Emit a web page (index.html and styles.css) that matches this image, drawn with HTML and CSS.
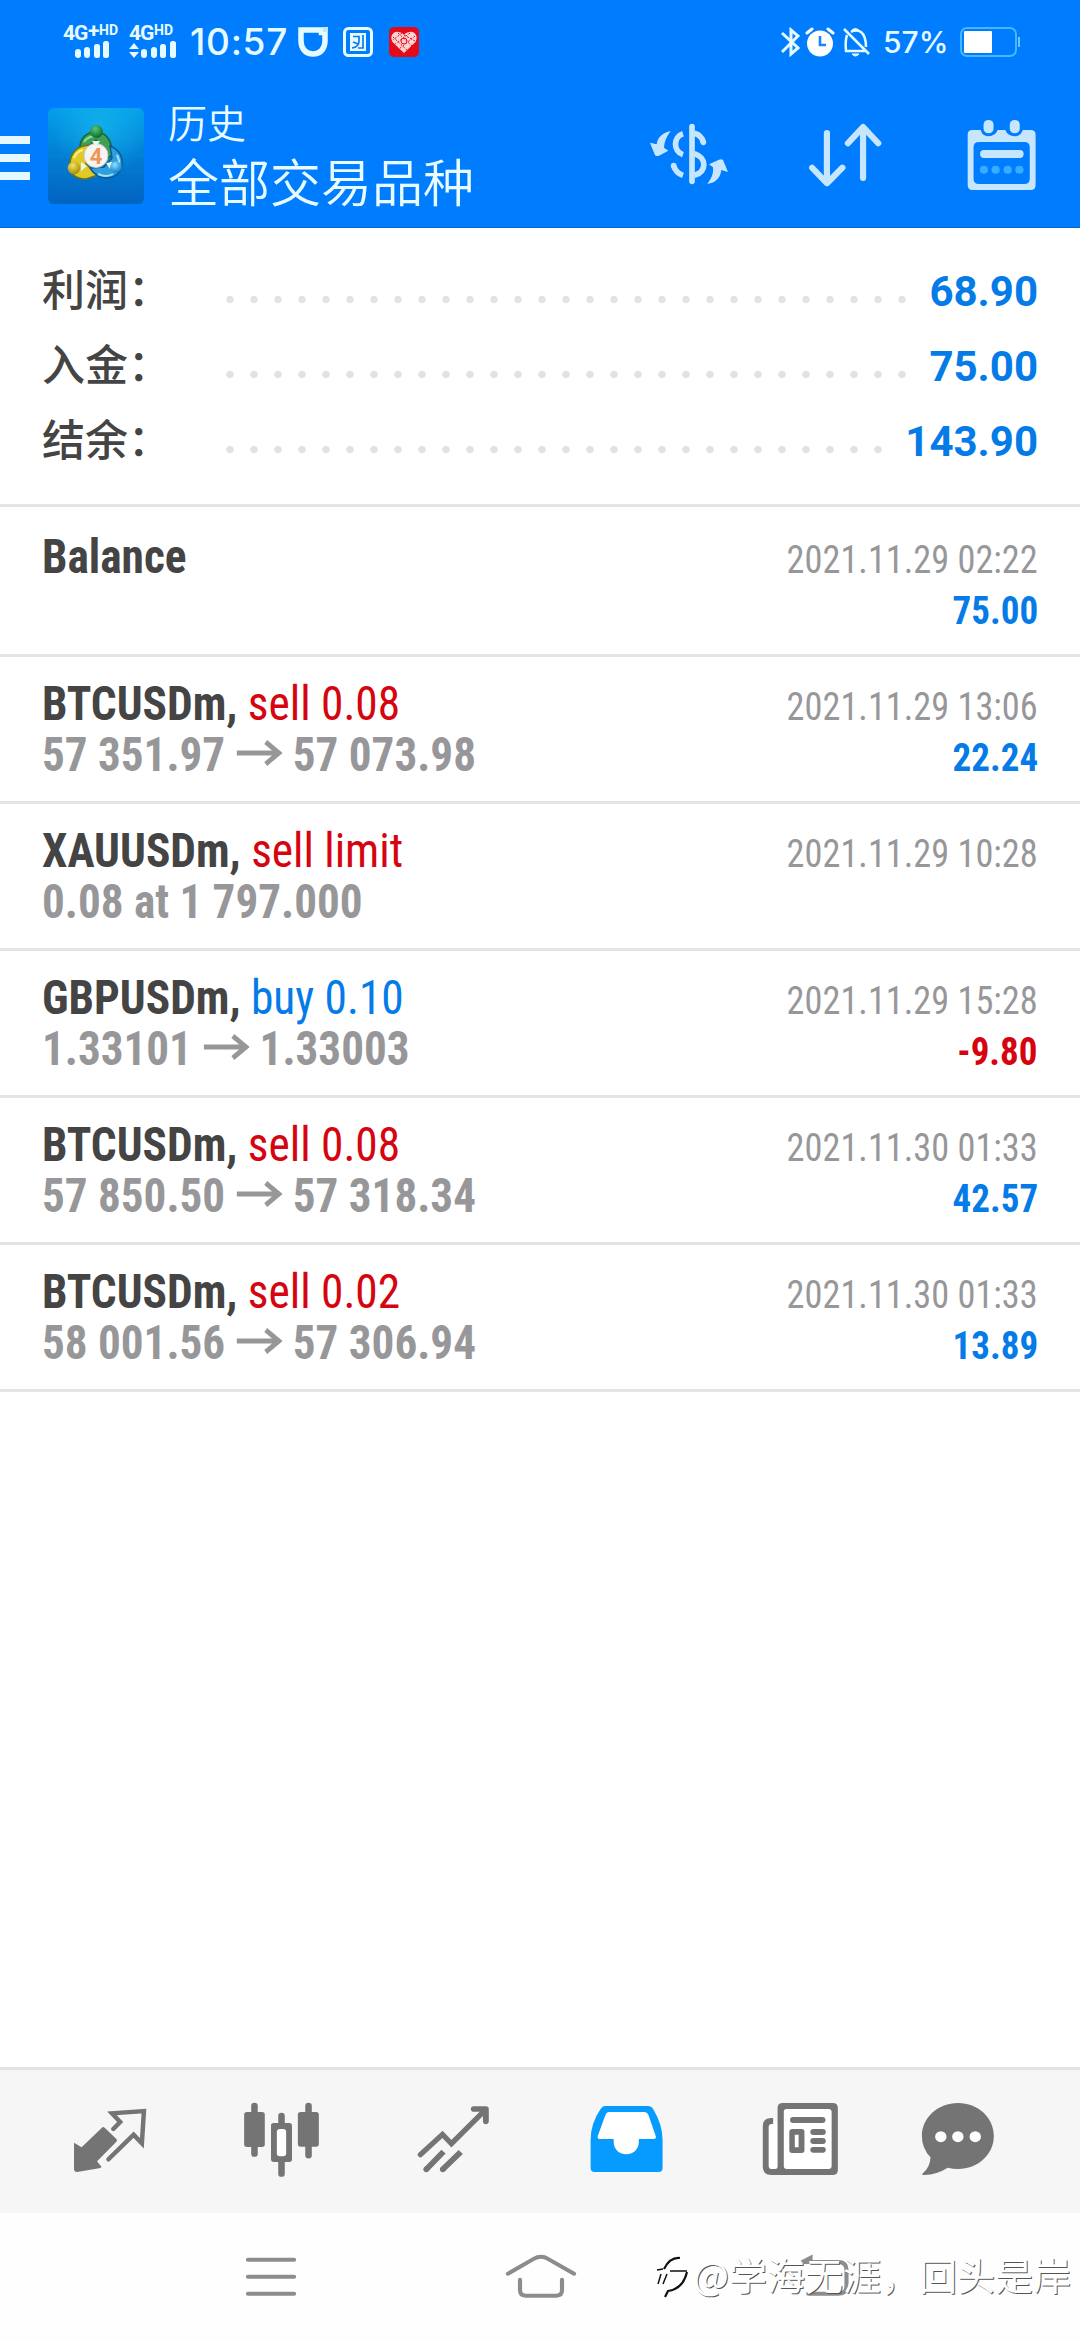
FILE: index.html
```html
<!DOCTYPE html>
<html lang="zh-CN">
<head>
<meta charset="utf-8">
<title>历史</title>
<link rel="stylesheet" href="styles.css">
</head>
<body>
<div class="screen">
  <div class="status">
    <div class="status-left">
      <div class="sim">
        <div class="net"><b>4G</b><i>+</i><small>HD</small></div>
        <svg class="bars" width="48" height="18" viewBox="0 0 48 18" fill="#e6fbff"><rect x="3" y="8" width="6" height="9" rx="3"/><rect x="12" y="6" width="6" height="11" rx="3"/><rect x="22" y="3" width="6" height="14" rx="2.5"/><rect x="31" y="0" width="6" height="17" rx="2.5"/></svg>
      </div>
      <div class="sim second">
        <div class="net"><b>4G</b><small>HD</small></div>
        <svg class="bars" width="48" height="18" viewBox="0 0 48 18" fill="#e6fbff"><path d="M0 8l5-6 5 6zM0 11h10l-5 6z"/><rect x="12" y="8" width="6" height="9" rx="3"/><rect x="22" y="6" width="6" height="11" rx="3"/><rect x="31" y="3" width="6" height="14" rx="2.5"/><rect x="41" y="0" width="6" height="17" rx="2.5"/></svg>
      </div>
      <span class="clock">10:57</span>
      <svg class="app-a" width="30" height="30" viewBox="0 0 30 30"><path d="M3 3H23.500V5.500H27V14C27 22 22 27 15 27S3 22 3 14z" fill="none" stroke="#e6fbff" stroke-width="5.500"/><path d="M25 0h5v5h-5z" fill="#bfe9ff"/></svg>
      <svg class="app-b" width="30" height="30" viewBox="0 0 30 30" fill="none" stroke="#e6fbff"><rect x="1.500" y="1.500" width="27" height="27" rx="4" stroke-width="3"/><path d="M7 6H23V24H7z" fill="#e6fbff" stroke="none"/><path d="M10 9.500H16V14M9 21Q16 20 16 14M10 15L15 17M20 8V21H15" stroke="#0a78f5" stroke-width="1.700"/></svg>
      <svg class="app-c" width="30" height="30" viewBox="0 0 30 30"><rect width="30" height="30" rx="5" fill="#e50a17"/><path d="M15 26L3.500 15C0 9 5 4 9 5Q13 5 15 8Q17 5 21 5C25 4 30 9 26.500 15z" fill="#ffd3d3"/><path d="M4 10L19 24M9 6L23 19M15 8L26 14M26 9L10 22M21 6L6 17M13 6L4 13" stroke="#e50a17" stroke-width="1" stroke-dasharray="2 1.500"/><circle cx="15" cy="14" r="3" fill="none" stroke="#e50a17"/></svg>
    </div>
    <div class="status-right">
      <svg width="19" height="30" viewBox="0 0 19 30" fill="none" stroke="#e6fbff" stroke-width="3"><path d="M1 6L17 21L10 27V3L17 9L1 25"/></svg>
      <svg class="alarm" width="30" height="30" viewBox="0 0 30 30"><circle cx="15" cy="16.500" r="13" fill="#fff"/><path d="M2 6L7 2M28 6L23 2" stroke="#fff" stroke-width="3" stroke-linecap="round"/><path d="M15 9V18H21" fill="none" stroke="#1a85f5" stroke-width="2.600"/></svg>
      <svg class="bell" width="27" height="30" viewBox="0 0 27 30" fill="none" stroke="#e6fbff" stroke-width="2.500"><path d="M1 2L26 27M8 5Q13 2 18 5Q23 9 23 20M4 8Q2 14 3 24H22"/><path d="M8 4Q12 -1 17 4M9 27Q12 31 16 27z" fill="#e6fbff" stroke-width="1"/></svg>
      <span class="percent">57%</span>
      <svg width="61" height="30" viewBox="0 0 61 30"><rect x="1" y="1" width="55" height="28" rx="6" fill="none" stroke="#45b8ff" stroke-width="2"/><rect x="4" y="4" width="28" height="22" rx="1" fill="#fff"/><path d="M59 10v10" stroke="#6cc4ff" stroke-width="2"/></svg>
    </div>
  </div>

  <header class="header">
    <svg class="menu" width="30" height="44" viewBox="0 0 30 44" fill="#e6f8ff"><path d="M0 0h30v8H0zM0 18h30v8H0zM0 36h30v8H0z"/></svg>
    <svg class="brand" width="96" height="96" viewBox="0 0 96 96">
      <defs>
        <linearGradient id="bg" x1="0" y1="0" x2="0" y2="1"><stop offset="0" stop-color="#04a0ea"/><stop offset=".55" stop-color="#027bd0"/><stop offset="1" stop-color="#0263c0"/></linearGradient>
        <radialGradient id="glow" cx=".55" cy=".2" r=".5"><stop offset="0" stop-color="#18b8ee" stop-opacity=".7"/><stop offset="1" stop-color="#18b8ee" stop-opacity="0"/></radialGradient>
        <radialGradient id="gr" cx=".4" cy=".3" r=".7"><stop offset="0" stop-color="#58c878"/><stop offset="1" stop-color="#0b6a2c"/></radialGradient>
        <radialGradient id="ye" cx=".4" cy=".3" r=".7"><stop offset="0" stop-color="#f4e260"/><stop offset="1" stop-color="#a88c06"/></radialGradient>
        <radialGradient id="bl" cx=".4" cy=".3" r=".7"><stop offset="0" stop-color="#8fe0ff"/><stop offset="1" stop-color="#0d7fc8"/></radialGradient>
      </defs>
      <rect width="96" height="96" rx="6" fill="url(#bg)"/><rect width="96" height="96" rx="6" fill="url(#glow)"/>
      <path d="M16 0V96M32 0V96M48 0V96M64 0V96M80 0V96M0 16H96M0 32H96M0 48H96M0 64H96M0 80H96" stroke="#3db4ee" stroke-opacity=".08"/>
      <path d="M32 42C31 29 40 24 48 24S65 30 64 48L56 50L48 32L38 40Z" fill="#3f9f52" stroke="#17643a" stroke-width="1.500"/>
      <path d="M41 37C28 38 22 46 22 56Q22 71 38 71L50 67L38 56Z" fill="#e0cb26" stroke="#6b7318" stroke-width="1.500"/>
      <path d="M62 38C72 42 75 50 74 58Q71 69 60 70Q48 70 42 60L56 59L64 50Z" fill="#2f9fdc" stroke="#0b5a97" stroke-width="1.500"/>
      <path d="M36 34Q40 28 48 28" fill="none" stroke="#8fdc9a" stroke-width="2"/>
      <path d="M26 50Q29 43 35 42" fill="none" stroke="#fff08a" stroke-width="2"/>
      <path d="M69 47Q72 53 71 58M50 66Q58 70 65 66" fill="none" stroke="#a3e2ff" stroke-width="2"/>
      <circle cx="48" cy="47.500" r="12" fill="#f8f4f2" stroke="#c9c9c9" stroke-width="1"/>
      <path d="M44 33H52L50 36H46ZM33 54L39 58L33 63ZM58 55L64 54L62 61Z" fill="#eaf6ee"/>
      <circle cx="48.500" cy="23.500" r="6.500" fill="url(#gr)"/><circle cx="26" cy="60" r="6.300" fill="url(#ye)"/><circle cx="68" cy="59" r="5.800" fill="url(#bl)"/>
      <text class="brand-num" x="48" y="55.500" text-anchor="middle">4</text>
    </svg>
    <div class="titles"><div class="t1">历史</div><div class="t2">全部交易品种</div></div>
    <div class="actions">
      <svg width="78" height="72" viewBox="33 30 234 216" fill="none" stroke="#c6e6fd" stroke-width="17">
        <path d="M159 50V214" stroke-linecap="round"/>
        <path d="M132 71C102 80 102 124 132 134M166 131C204 144 204 184 166 196"/>
        <path d="M166 70Q188 76 193 97" /><circle cx="193" cy="97" r="8.500" fill="#c6e6fd" stroke="none"/>
        <path d="M104 167Q110 188 132 196"/><circle cx="104" cy="167" r="8.500" fill="#c6e6fd" stroke="none"/>
        <path d="M95 63C72 68 56 80 53 103L33 98L48 136Q52 140 60 137L88 122L75 113C76 95 82 80 95 63ZM205 222C218 205 224 190 222 172L210 163L240 149Q248 146 252 150L267 186L247 180C244 205 230 218 205 222Z" fill="#c6e6fd" stroke="none"/>
      </svg>
      <svg width="77" height="72" viewBox="784 360 223.600 216" preserveAspectRatio="none" fill="none" stroke="#c6e6fd" stroke-width="18" stroke-linecap="round" stroke-linejoin="round"><path d="M836 399V548M793 503L836 550L881 503M941 534V384M897 430L941 381L985 430"/></svg>
      <svg width="70" height="72" viewBox="1241 360 203 216" preserveAspectRatio="none" fill="#c6e6fd">
        <path fill-rule="evenodd" d="M1256 390H1281Q1284 408 1303 409Q1323 408 1330 390H1352Q1359 408 1379 409Q1398 408 1403 390H1426Q1440 390 1440 404V556Q1440 570 1426 570H1257Q1243 570 1243 556V404Q1243 390 1256 390ZM1276 426Q1260 426 1260 442V536Q1260 552 1276 552H1407Q1423 552 1423 536V442Q1423 426 1407 426Z"/>
        <rect x="1289" y="360" width="29" height="40" rx="14"/><rect x="1365" y="360" width="29" height="40" rx="14"/>
        <rect x="1279" y="450" width="126" height="24" rx="11"/>
        <g fill="#36adff"><circle cx="1290" cy="509" r="12"/><circle cx="1324" cy="509" r="12"/><circle cx="1359" cy="509" r="12"/><circle cx="1393" cy="509" r="12"/></g>
      </svg>
    </div>
  </header>

  <section class="summary">
    <div class="sum-row"><span class="label">利润：</span><span class="dots"></span><span class="sum-val">68.90</span></div>
    <div class="sum-row"><span class="label">入金：</span><span class="dots"></span><span class="sum-val">75.00</span></div>
    <div class="sum-row"><span class="label">结余：</span><span class="dots"></span><span class="sum-val">143.90</span></div>
  </section>

  <main class="deals">
    <article class="deal first">
      <div class="line"><div class="name"><b>Balance</b></div><time>2021.11.29 02:22</time></div>
      <div class="line"><div class="price">&nbsp;</div><div class="profit">75.00</div></div>
    </article>
    <article class="deal">
      <div class="line"><div class="name"><b>BTCUSDm,</b> <span class="sell">sell 0.08</span></div><time>2021.11.29 13:06</time></div>
      <div class="line"><div class="price">57 351.97<svg class="arrow" viewBox="0 0 49 26"><path d="M0 13H45M31 2L45 13L31 24"/></svg>57 073.98</div><div class="profit">22.24</div></div>
    </article>
    <article class="deal">
      <div class="line"><div class="name"><b>XAUUSDm,</b> <span class="sell">sell limit</span></div><time>2021.11.29 10:28</time></div>
      <div class="line"><div class="price">0.08 at 1 797.000</div></div>
    </article>
    <article class="deal">
      <div class="line"><div class="name"><b>GBPUSDm,</b> <span class="buy">buy 0.10</span></div><time>2021.11.29 15:28</time></div>
      <div class="line"><div class="price">1.33101<svg class="arrow" viewBox="0 0 49 26"><path d="M0 13H45M31 2L45 13L31 24"/></svg>1.33003</div><div class="profit loss">-9.80</div></div>
    </article>
    <article class="deal">
      <div class="line"><div class="name"><b>BTCUSDm,</b> <span class="sell">sell 0.08</span></div><time>2021.11.30 01:33</time></div>
      <div class="line"><div class="price">57 850.50<svg class="arrow" viewBox="0 0 49 26"><path d="M0 13H45M31 2L45 13L31 24"/></svg>57 318.34</div><div class="profit">42.57</div></div>
    </article>
    <article class="deal">
      <div class="line"><div class="name"><b>BTCUSDm,</b> <span class="sell">sell 0.02</span></div><time>2021.11.30 01:33</time></div>
      <div class="line"><div class="price">58 001.56<svg class="arrow" viewBox="0 0 49 26"><path d="M0 13H45M31 2L45 13L31 24"/></svg>57 306.94</div><div class="profit">13.89</div></div>
    </article>
  </main>

  <nav class="tabs">
    <svg viewBox="69.700 60 499.500 429" preserveAspectRatio="none"><path d="M215 278L237 292L296 233Q300 229 304 233L338 267Q342 271 338 275L282 334L295 351Q293 354 288 355L224 366Q215 366 215 357Z" fill="#747474"/><path d="M329 237L349 216L325 190L418 183L412 280L388 254L315 328" fill="none" stroke="#747474" stroke-width="13" stroke-linecap="round"/></svg>
    <svg viewBox="569.200 60 499.500 429" preserveAspectRatio="none"><g stroke="#747474" stroke-width="19" stroke-linecap="round"><path d="M739 168V311M896 168V316M817.500 198V230M817.500 335V371"/></g><g fill="#747474"><rect x="709" y="186" width="60" height="105" rx="8"/><rect x="865" y="186" width="61" height="104" rx="8"/><rect x="787" y="219" width="61" height="117" rx="8"/></g><rect x="804" y="237" width="27" height="82" rx="9" fill="#fff"/></svg>
    <svg viewBox="1068.700 60 499.500 429" preserveAspectRatio="none" fill="none" stroke="#747474"><path d="M1221 314L1285 253L1311 281L1408 181" stroke-width="15.500" stroke-linecap="round"/><path d="M1376 177H1411V214" stroke-width="17" stroke-linecap="round" stroke-linejoin="round"/><path d="M1238 358L1288 305M1286 358L1338 306" stroke-width="17"/><g fill="#747474" stroke="none"><circle cx="1238" cy="358" r="8.500"/><circle cx="1286" cy="358" r="8.500"/></g></svg>
    <svg viewBox="0 60 499.500 429" preserveAspectRatio="none"><path fill="#069cff" d="M188 168H314Q323 168 329 178Q356 225 356 270V353Q356 366 344 366H159Q147 366 147 353V270Q147 220 176 177Q182 168 188 168Z"/><path d="M200 186H302Q311 186 315 195L336 258Q339 267 329 267H287V275C287 325 214 325 214 275V267H175Q165 267 168 257L190 195Q193 186 200 186Z" fill="#fff"/></svg>
    <svg viewBox="499.500 60 499.500 429" preserveAspectRatio="none"><rect x="664" y="213" width="26" height="144" rx="7" fill="#fff"/><rect x="708" y="177" width="139" height="180" rx="7" fill="#fff"/><path fill="#747474" fill-rule="evenodd" d="M705 159H850Q865 159 865 174V360Q865 375 850 375H672Q647 375 647 350V229Q647 204 672 204H677V222H674Q664 222 664 232V347Q664 357 674 357H683Q690 357 690 350V174Q690 159 705 159ZM716 177Q708 177 708 185V348Q708 357 717 357H838Q847 357 847 348V186Q847 177 838 177Z"/><g fill="#747474"><rect x="726" y="201" width="103" height="18" rx="9"/><path fill-rule="evenodd" d="M734 237H760Q768 237 768 245V301Q768 309 760 309H732Q724 309 724 301V245Q724 237 734 237ZM740 254V292H751V254Z"/><rect x="785" y="237" width="45" height="18" rx="9"/><rect x="785" y="264" width="45" height="18" rx="9"/><rect x="785" y="291" width="45" height="17" rx="8.500"/></g></svg>
    <svg viewBox="999 60 499.500 429" preserveAspectRatio="none"><path d="M1214 159C1272 159 1318 203 1318 258S1272 357 1214 357Q1198 357 1184 353Q1155 373 1115 375Q1106 375 1112 370Q1133 352 1134 322Q1109 295 1109 258C1109 203 1156 159 1214 159Z" fill="#747474"/><g fill="#fff"><circle cx="1164" cy="260" r="16.500"/><circle cx="1213.500" cy="260" r="16.500"/><circle cx="1264" cy="260" r="16.500"/></g></svg>
  </nav>

  <div class="sysnav">
    <svg viewBox="395 490 784 381" preserveAspectRatio="none"><path d="M720 630H854M720 681H854M720 732H854"/></svg>
    <svg viewBox="1179 490 784 381" preserveAspectRatio="none"><path d="M1475 672L1551 627Q1560 621 1571 621Q1582 621 1590 627L1667 672M1510 690V722Q1510 738 1526 738H1616Q1632 738 1632 722V690"/></svg>
    <svg viewBox="395 490 784 381" preserveAspectRatio="none"><path d="M765 637H865Q890 637 890 660V710Q890 732 868 732H779"/><path d="M760 633L790 617V642Z" fill="#8c8c8c" stroke-width="3"/></svg>
  </div>

  <div class="watermark">
    <svg width="34" height="44" viewBox="0 0 34 44" fill="none" stroke="#111"><path d="M1 14L7 13M14 15H31M7 28L11 18M2 28L5 18" stroke-width="1.500"/><path d="M8 13Q14 1 24 2M31 16Q27 33 12 35L9 41" stroke-width="2.200"/></svg>
    <span>@学海无涯，回头是岸</span>
  </div>
</div>
</body>
</html>
```
FILE: styles.css
```css
* { box-sizing: border-box; }
body { margin: 0; background: #fff; }
svg { display: block; flex: none; }

.screen {
  position: relative;
  display: flex;
  flex-direction: column;
  width: 1080px;
  height: 2340px;
  overflow: hidden;
  font-family: Roboto, "Noto Sans CJK SC", sans-serif;
}

/* status bar */
.status {
  display: flex;
  justify-content: space-between;
  height: 84px;
  padding: 0 59px 0 63px;
  background: #007cff;
  color: #e6fbff;
}
.status-left, .status-right { display: flex; align-items: center; }
.sim { width: 66px; height: 34px; }
.sim.second { width: 61px; }
.sim .bars { margin-left: 9px; }
.sim.second .bars { margin-left: 0; }
.net { display: flex; height: 16px; line-height: 16px; font-family: Roboto, sans-serif; }
.net b { width: 25px; font-size: 21px; letter-spacing: -1px; }
.net i { width: 11px; font-size: 21px; line-height: 12px; font-style: normal; font-weight: 700; }
.net small { font-size: 14px; line-height: 10px; font-weight: 700; }
.clock { width: 108px; font: 500 37px/84px Inter, sans-serif; letter-spacing: .7px; }
.app-b { margin-left: 15px; }
.app-c { margin-left: 16px; }
.alarm { margin-left: 5px; }
.bell { margin-left: 8px; }
.percent { width: 77px; margin-left: 13px; font: 500 30px/88px Inter, sans-serif; }

/* header */
.header {
  display: flex;
  align-items: center;
  height: 144px;
  padding-right: 43px;
  background: #007cff;
  border-bottom: 1px solid #0a5fd0;
  color: #e8fbff;
}
.menu { margin-top: 4px; }
.brand { margin-left: 18px; }
.brand-num { font: 700 22px Roboto, sans-serif; fill: #ee9558; }
.titles { margin-left: 24px; font-family: "Noto Sans CJK SC", sans-serif; font-weight: 350; }
.t1 { font-size: 39px; line-height: 48px; }
.t2 { font-size: 51px; line-height: 70px; }
.actions { display: flex; gap: 81px; margin-left: auto; }

/* totals */
.summary { height: 279px; padding: 22px 42px 0; border-bottom: 3px solid #e4e4e4; }
.sum-row { display: flex; align-items: baseline; height: 75px; line-height: 75px; }
.label { width: 176px; font: 500 43px/75px "Noto Sans CJK SC", sans-serif; color: #444; }
.dots {
  flex: 1;
  height: 13px;
  margin-right: 12px;
  background: radial-gradient(circle at 12px 6.5px, #e2e2e2 3.2px, transparent 4.2px) 0 0 / 24px 13px repeat-x;
}
.sum-val { font: 700 42px/75px Roboto, sans-serif; color: #057be8; }

/* deals */
.deals { flex: 1; font-family: "Roboto Condensed", sans-serif; }
.deal { height: 147px; padding: 21px 42px 0; border-bottom: 3px solid #e4e4e4; }
.deal.first { height: 150px; padding-top: 24px; }
.line { display: flex; justify-content: space-between; align-items: baseline; height: 51px; line-height: 51px; white-space: nowrap; }
.name, .price { font-size: 48px; transform-origin: left; }
.name { color: #444; transform: scaleX(.945); }
.price { display: flex; font-weight: 700; color: #97979a; transform: scaleX(.94); }
.sell { color: #d5040f; }
.buy { color: #057be8; }
.arrow { width: 49px; height: 26px; margin: 11px 11px 0 12px; fill: none; stroke: #97979a; stroke-width: 5; }
time, .profit { font-size: 39px; transform-origin: right; }
time { color: #97979a; transform: scaleX(.931); }
.profit { font-weight: 700; color: #057be8; transform: scaleX(.949); }
.profit.loss { color: #d5040f; }

/* tabs */
.tabs {
  display: flex;
  height: 146px;
  padding-left: 24px;
  border-top: 3px solid #e2e2e2;
  background: #f6f6f6;
}
.tabs svg { width: 172px; height: 143px; }

/* system navigation */
.sysnav { display: flex; height: 127px; padding: 0 136px; background: #fefefe; }
.sysnav svg { width: 270px; height: 127px; fill: none; stroke: #8c8c8c; stroke-width: 12; stroke-linecap: round; }

.watermark {
  position: absolute;
  right: 9px;
  bottom: 38px;
  display: flex;
  align-items: center;
  gap: 3px;
  font: 400 38px/56px "Noto Sans CJK SC", sans-serif;
  color: #fff;
  text-shadow: 1px 1px 0 #555;
}
.watermark svg { margin-top: 8px; }
```
